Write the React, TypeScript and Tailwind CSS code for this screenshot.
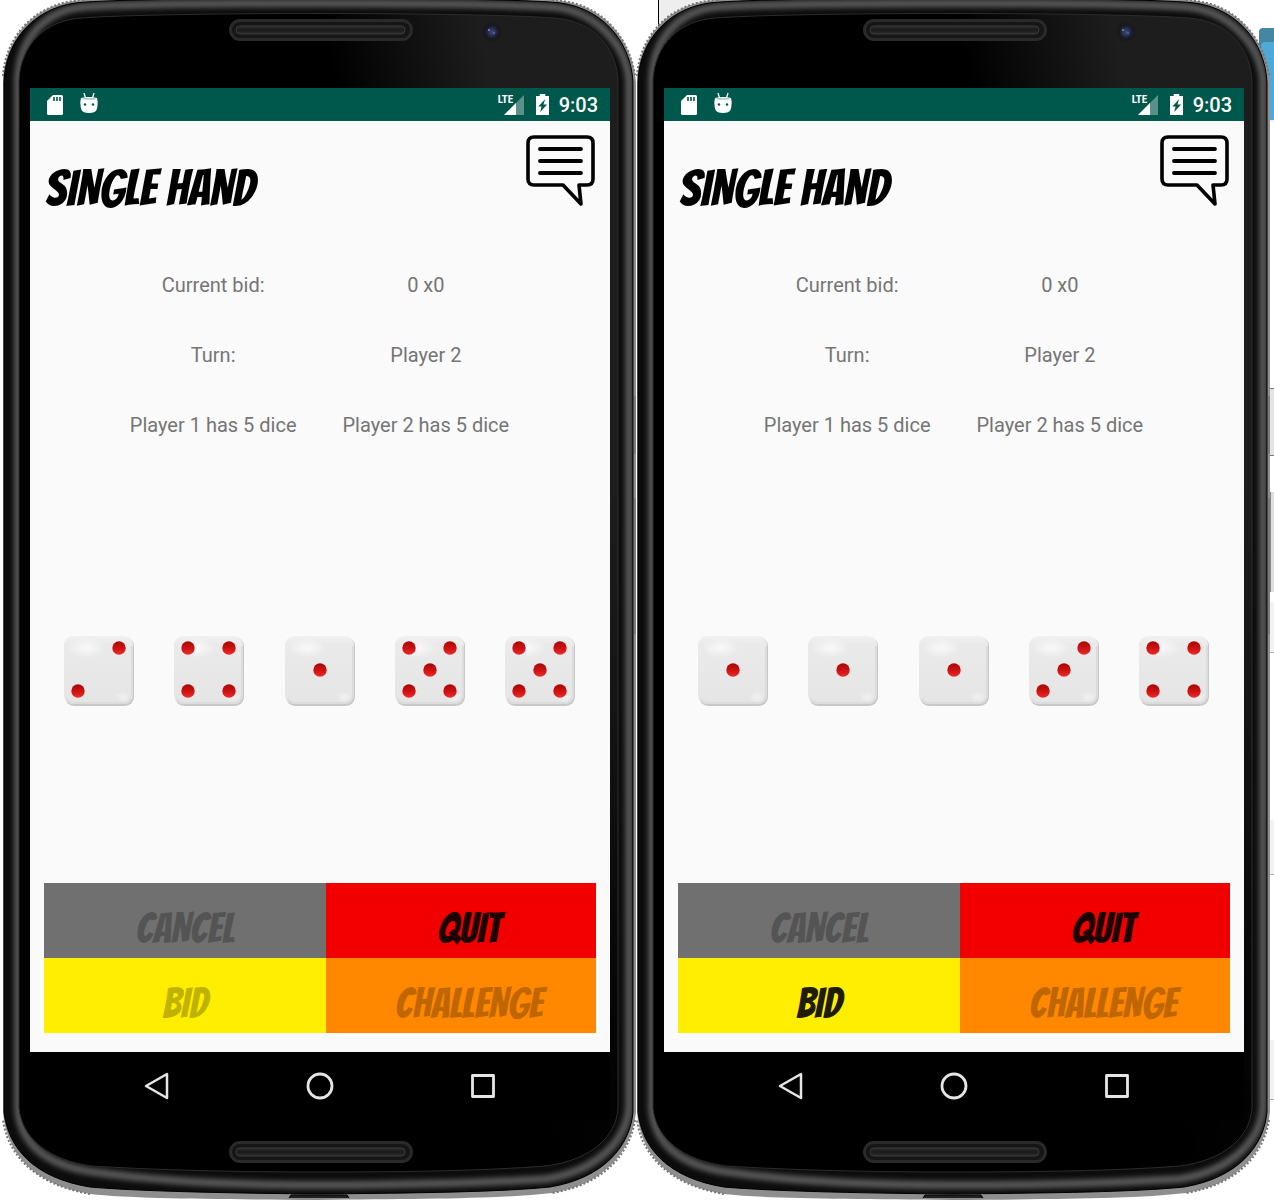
import React from "react";

type Face = 1 | 2 | 3 | 4 | 5 | 6;

const PIPS: Record<Face, [number, number][]> = {
  1: [[35, 34]],
  2: [[55, 12], [14, 55]],
  3: [[55, 12], [35, 34], [14, 55]],
  4: [[14, 12], [55, 12], [14, 55], [55, 55]],
  5: [[14, 12], [55, 12], [35, 34], [14, 55], [55, 55]],
  6: [[14, 12], [55, 12], [14, 34], [55, 34], [14, 55], [55, 55]],
};

const BODY =
  "M3 82C4 40 32 2 84 0C160 -5 476 -5 552 0C604 2 632 40 636 82V1112C632 1150 606 1184 552 1193C500 1199 420 1199 318 1200C216 1199 136 1199 90 1194C32 1184 6 1152 3 1112Z";
const EDGE =
  "M4 82C5 42 34 4 86 2C160 -3 476 -3 550 2C602 4 631 42 633 82V1112C630 1146 604 1178 550 1187C500 1192 420 1193 318 1194C216 1193 136 1191 90 1187C34 1178 8 1148 4 1112Z";
const FACE =
  "M19 80C21 44 46 20 82 18C160 12 476 12 554 18C590 20 616 44 618 80V1108C616 1138 590 1160 546 1166C480 1171 400 1172 318 1172C236 1172 156 1170 92 1166C48 1160 22 1138 19 1108Z";
const RIM =
  "M18 80C19 40 44 10 84 7C160 2 476 2 552 7C594 10 626 44 629 80V1108C626 1142 596 1171 546 1179C480 1183 400 1185 318 1185C236 1185 156 1181 94 1172C44 1165 20 1142 18 1108Z";
const CORNERS =
  "M3 76C5 40 32 2 84 0M552 0C604 2 630 40 635 76M635 1120C630 1152 606 1184 552 1193M90 1194C32 1184 7 1152 3 1120";

function Shell({ id }: { id: string }) {
  return (
    <svg
      className="pointer-events-none absolute inset-0 h-full w-full overflow-visible"
      viewBox="0 0 634 1200"
      preserveAspectRatio="none"
      aria-hidden="true"
    >
      <defs>
        <clipPath id={`${id}-edge`}>
          <path d={EDGE} />
        </clipPath>
        <filter id={`${id}-soft`} x="-10%" y="-10%" width="120%" height="120%">
          <feGaussianBlur stdDeviation="2.5" />
        </filter>
        <linearGradient id={`${id}-gloss`} x1="330" y1="60" x2="480" y2="30" gradientUnits="userSpaceOnUse">
          <stop offset="0" stopColor="#000" />
          <stop offset="1" stopColor="#1d1d1d" />
        </linearGradient>
        <linearGradient id={`${id}-fade`} x1="0" y1="0" x2="0" y2="1200" gradientUnits="userSpaceOnUse">
          <stop offset="0.4" stopColor="#000" stopOpacity="0" />
          <stop offset="0.92" stopColor="#000" stopOpacity="0.8" />
        </linearGradient>
        <linearGradient id={`${id}-slot`} x1="0" y1="0" x2="0" y2="1">
          <stop offset="0" stopColor="#2c2c2c" />
          <stop offset="0.5" stopColor="#1a1a1a" />
          <stop offset="1" stopColor="#2e2e2e" />
        </linearGradient>
        <radialGradient id={`${id}-lens`}>
          <stop offset="0" stopColor="#3d4a7c" />
          <stop offset="0.6" stopColor="#252b49" />
          <stop offset="1" stopColor="#15161f" />
        </radialGradient>
      </defs>
      <path d={BODY} fill="#8e8e8e" />
      <path d={CORNERS} fill="none" stroke="#777" strokeWidth="2" strokeDasharray="2 2" />
      <path d={EDGE} fill="#0c0c0c" />
      <g clipPath={`url(#${id}-edge)`}>
        <path d={RIM} fill="none" stroke="#565656" strokeWidth="8" filter={`url(#${id}-soft)`} />
      </g>
      <path d={EDGE} fill="none" stroke="#000" strokeWidth="1" />
      <path d={FACE} fill={`url(#${id}-gloss)`} />
      <path d={FACE} fill={`url(#${id}-fade)`} />
      <path d={FACE} fill="none" stroke="#2c2c2c" strokeWidth="1" />
      {[19, 1141].map((y) => (
        <g key={y}>
          <rect x="229" y={y} width="184" height="22" rx="11" fill="#2a2a2a" />
          <rect x="232" y={y + 3} width="178" height="16" rx="8" fill="#161616" />
          <rect x="236" y={y + 7} width="169" height="8" rx="4" fill={`url(#${id}-slot)`} stroke="#3a3a3a" />
        </g>
      ))}
      <circle cx="492" cy="32" r="10" fill="#1a1a1c" />
      <circle cx="492" cy="32" r="7" fill={`url(#${id}-lens)`} />
      <circle cx="489" cy="30" r="1" fill="#7f8cc0" />
      <circle cx="494" cy="33" r="1" fill="#5b679c" />
      <path d="M289 1198L291 1195H347L349 1198" fill="#222" stroke="#000" />
      <path d="M635 396V454M635 498V634" stroke="#666" strokeWidth="1" />
    </svg>
  );
}

function Die({ face, id }: { face: Face; id: string }) {
  return (
    <svg className="block size-[70px]" viewBox="0 0 70 70" role="img" aria-label={`Die showing ${face}`}>
      <defs>
        <linearGradient id={`${id}-body`} x1="0" y1="0" x2="0" y2="1">
          <stop offset="0" stopColor="#f1f1f1" />
          <stop offset="0.12" stopColor="#eaeaea" />
          <stop offset="1" stopColor="#e5e5e5" />
        </linearGradient>
        <radialGradient id={`${id}-shine`}>
          <stop offset="0" stopColor="#f9f9f9" />
          <stop offset="1" stopColor="#f9f9f9" stopOpacity="0" />
        </radialGradient>
        <linearGradient id={`${id}-pip`} x1="0" y1="0" x2="0" y2="1">
          <stop offset="0" stopColor="#a60808" />
          <stop offset="0.55" stopColor="#d01212" />
          <stop offset="1" stopColor="#ef2b2b" />
        </linearGradient>
      </defs>
      <rect x="1" y="1" width="69" height="69" rx="9" fill="#c8c8c8" />
      <rect x="0" y="0" width="69" height="68" rx="9" fill={`url(#${id}-body)`} />
      <path d="M3 63Q5 67 10 67H59Q68 67 68 58V10" fill="none" stroke="#dcdcdc" strokeWidth="2" />
      <ellipse cx="22" cy="12" rx="19" ry="10" fill={`url(#${id}-shine)`} />
      <ellipse cx="59" cy="61" rx="8" ry="6" fill={`url(#${id}-shine)`} opacity="0.6" />
      {PIPS[face].map(([x, y]) => (
        <circle key={`${x}-${y}`} cx={x} cy={y} r="6.7" fill={`url(#${id}-pip)`} />
      ))}
    </svg>
  );
}

function StatusBar() {
  return (
    <header className="flex h-[33px] items-center bg-[#00574b] pr-3 pl-4 text-white">
      <svg className="h-5 w-[18px]" viewBox="0 0 18 20" aria-label="SD card" role="img">
        <path d="M7 0H15.5Q17 0 17 1.500V18.500Q17 20 15.500 20H2.500Q1 20 1 18.500V6Z" fill="#fff" />
        <path d="M8 2V6M11 2V6M14 2V6" stroke="#00574b" strokeWidth="1.600" />
      </svg>
      <svg className="mb-0.5 ml-4 h-[21px] w-[18px]" viewBox="0 0 18 21" aria-label="Debugging" role="img">
        <path d="M4 0L5.500 5M14 0L12.500 5" stroke="#fff" strokeWidth="1.300" />
        <path d="M1 5Q9 3 17 5Q18.500 11 16.500 17Q15 20 9 20Q3 20 1.500 17Q-0.500 11 1 5Z" fill="#fff" />
        <path d="M2.500 5.500Q9 6.500 15.500 5.500" fill="none" stroke="#a8cac5" strokeWidth="1.500" />
        <circle cx="5" cy="11.500" r="1.200" fill="#00574b" />
        <circle cx="13" cy="11.500" r="1.200" fill="#00574b" />
      </svg>
      <div className="relative ml-auto h-5 w-[26px]">
        <svg className="h-full w-full" viewBox="0 0 26 20" aria-hidden="true">
          <path d="M26 0V20H6Z" fill="#5b9189" />
          <path d="M18 8V20H6Z" fill="#fff" />
        </svg>
        <span className="absolute top-0 left-0 font-['Roboto_Condensed','Open_Sans_Condensed','Roboto'] text-[11px] leading-[10px] font-bold">
          LTE
        </span>
      </div>
      <svg className="ml-3 h-[21px] w-[13px]" viewBox="0 0 14 21" preserveAspectRatio="none" aria-label="Battery charging" role="img">
        <path d="M4 0H10V2H14V21H0V2H4Z" fill="#fff" />
        <path d="M10 5L2.500 12.500H6L4.500 18L12 10.500H8Z" fill="#00574b" />
      </svg>
      <time className="ml-2.5 text-xl leading-6 font-medium">9:03</time>
    </header>
  );
}

function GameButton({ label, tone, disabled }: { label: string; tone: string; disabled?: boolean }) {
  return (
    <button
      type="button"
      disabled={disabled}
      className={`h-[75px] pt-4 text-center font-['Bangers','Roboto',sans-serif] text-[42px] leading-[52px] uppercase ${tone} ${disabled ? "text-black/25" : "text-black/90"}`}
    >
      {label}
    </button>
  );
}

function Phone({ id, dice, canBid }: { id: string; dice: Face[]; canBid: boolean }) {
  return (
    <section className="relative min-w-0 flex-1 pt-[88px] pr-6 pb-[81px] pl-[30px]">
      <Shell id={id} />
      <div className="relative">
        <StatusBar />
        <main className="bg-[#fafafa] px-[14px] pt-[13px] pb-[19px] text-[#757575]">
          <div className="flex items-start justify-between">
            <h1 className="pt-[29px] pl-px font-['Bangers','Roboto',sans-serif] text-[50px] leading-[52px] text-black">
              SINGLE HAND
            </h1>
            <button type="button" aria-label="Messages" className="h-[74px] w-[70px]">
              <svg className="h-full w-full" viewBox="0 0 70 74" fill="none" stroke="#000" strokeLinecap="round" strokeLinejoin="round">
                <path
                  d="M8 3H61Q67 3 67 9V45Q67 51 61 51H53L55 70L37 51H8Q2 51 2 45V9Q2 3 8 3Z"
                  strokeWidth="3.600"
                />
                <path d="M14 15H55M14 27H55M14 39H55" strokeWidth="3.800" />
              </svg>
            </button>
          </div>
          <div className="mt-[58px] grid grid-cols-[auto_auto] justify-center gap-x-[46px] gap-y-[46px] pr-px text-center text-xl leading-6">
            <p>Current bid:</p>
            <p>0 x0</p>
            <p>Turn:</p>
            <p>Player 2</p>
            <p>Player 1 has 5 dice</p>
            <p>Player 2 has 5 dice</p>
          </div>
          <div className="mt-[199px] flex justify-between pr-[21px] pl-5">
            {dice.map((face, i) => (
              <Die key={i} face={face} id={`${id}-die-${i}`} />
            ))}
          </div>
          <div className="mt-[177px] grid grid-cols-[282fr_270fr]">
            <GameButton label="Cancel" tone="bg-[#707070]" disabled />
            <GameButton label="Quit" tone="bg-[#f20000] pl-4" />
            <GameButton label="Bid" tone="bg-[#ffee00]" disabled={!canBid} />
            <GameButton label="Challenge" tone="bg-[#ff8800] pl-4" disabled />
          </div>
        </main>
        <nav className="grid h-[67px] grid-cols-3 items-center bg-black px-[45px]">
          <button type="button" aria-label="Back" className="flex justify-center">
            <svg className="size-7" viewBox="0 0 28 28" fill="none" stroke="#e6e6e6" strokeWidth="2.500" strokeLinejoin="round">
              <path d="M24 2V26L3 14Z" />
            </svg>
          </button>
          <button type="button" aria-label="Home" className="flex justify-center">
            <svg className="size-7" viewBox="0 0 28 28" fill="none" stroke="#e6e6e6" strokeWidth="2.800">
              <circle cx="14" cy="14" r="12" />
            </svg>
          </button>
          <button type="button" aria-label="Overview" className="flex justify-center">
            <svg className="size-7" viewBox="0 0 28 28" fill="none" stroke="#e6e6e6" strokeWidth="2.800" strokeLinejoin="round">
              <rect x="3.500" y="3.500" width="21" height="21" />
            </svg>
          </button>
        </nav>
      </div>
    </section>
  );
}

function Desktop() {
  return (
    <div className="pointer-events-none absolute inset-0 overflow-hidden" aria-hidden="true">
      <div className="absolute top-0 left-[658px] h-10 w-[70px] border-l border-black bg-[#eeeeee]" />
      <div className="absolute top-7 right-0 h-5 w-[15px] rounded-tl bg-[#4587a3]" />
      <div className="absolute top-[42px] right-0 h-[78px] w-[13px] rounded-tl bg-[#4fa9d6] shadow" />
      <div className="absolute top-[388px] right-0 h-[68px] w-1 border-y border-dashed border-[#777] bg-[#e4e4e4]" />
      <div className="absolute top-[492px] right-0 h-[100px] w-1 border-l border-[#888] bg-[#dedede]" />
      <div className="absolute top-[602px] right-0 h-[51px] w-1 border-b border-[#aaa] bg-[#f2f2f2]" />
      <div className="absolute top-[820px] right-0 h-[55px] w-1 border-b border-[#aaa] bg-[#f2f2f2]" />
      <div className="absolute top-[1040px] right-0 h-[60px] w-1 border-b border-[#aaa] bg-[#f2f2f2]" />
    </div>
  );
}

export default function App() {
  return (
    <div className="relative flex overflow-hidden bg-white pr-1.5 font-['Roboto',sans-serif]">
      <Desktop />
      <Phone id="left" dice={[2, 4, 1, 5, 5]} canBid={false} />
      <Phone id="right" dice={[1, 1, 1, 3, 4]} canBid />
    </div>
  );
}
